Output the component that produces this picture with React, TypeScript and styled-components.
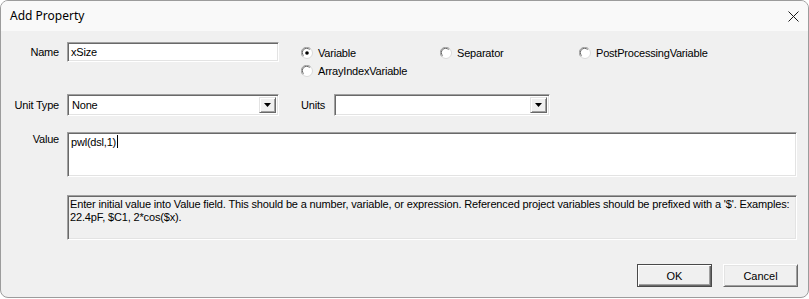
import React from "react";
import styled, { createGlobalStyle } from "styled-components";

const GlobalStyle = createGlobalStyle`
  html, body { margin: 0; padding: 0; background: #ffffff; }
  body { font-family: "Liberation Sans", Arial, sans-serif; }
`;

const Window = styled.div`
  box-sizing: border-box;
  width: 809px;
  height: 298px;
  border: 1px solid #9c9c9c;
  border-radius: 8px;
  overflow: hidden;
  background: #f0f0f0;
  display: flex;
  flex-direction: column;
`;

const TitleBar = styled.div`
  height: 30px;
  background: #f9f9f9;
  display: flex;
  align-items: center;
  justify-content: space-between;
  padding: 0 9px 0 9px;
  flex-shrink: 0;
`;

const Title = styled.div`
  font-family: "Noto Sans", "Open Sans", sans-serif;
  font-size: 12px;
  color: #000;
  margin-top: -1px;
`;

const CloseIcon = styled.svg`
  width: 11px;
  height: 11px;
`;

const Body = styled.div`
  display: flex;
  flex-direction: column;
  padding: 11px 10px 0 0;
  font-size: 11px;
  letter-spacing: -0.2px;
  color: #000;
`;

const Row = styled.div<{ $top?: number }>`
  display: flex;
  align-items: flex-start;
  margin-top: ${(p) => p.$top ?? 0}px;
`;

const Label = styled.div<{ $pt?: number }>`
  width: 58px;
  padding-right: 8px;
  text-align: right;
  flex-shrink: 0;
  padding-top: ${(p) => p.$pt ?? 0}px;
  line-height: 14px;
`;

const sunken = `
  box-sizing: border-box;
  border-style: solid;
  border-width: 1px;
  border-color: #a0a0a0 #ffffff #ffffff #a0a0a0;
  box-shadow: inset 1px 1px 0 #696969, inset -1px -1px 0 #e3e3e3;
`;

const TextInput = styled.div<{ $w: number; $h: number }>`
  ${sunken}
  width: ${(p) => p.$w}px;
  height: ${(p) => p.$h}px;
  background: #ffffff;
  padding: 2px 3px;
  line-height: 14px;
  white-space: nowrap;
`;

const HelpBox = styled.div`
  ${sunken}
  width: 730px;
  height: 45px;
  background: #f0f0f0;
  padding: 2px 2px;
  line-height: 13px;
  letter-spacing: -0.15px;
  white-space: nowrap;
  overflow: hidden;
`;

const Caret = styled.span`
  display: inline-block;
  width: 1px;
  height: 13px;
  background: #000;
  vertical-align: -2px;
  margin-left: 1px;
`;

const Combo = styled.div<{ $w: number }>`
  ${sunken}
  width: ${(p) => p.$w}px;
  height: 22px;
  background: #ffffff;
  display: flex;
  align-items: stretch;
  padding: 2px;
`;

const ComboText = styled.div`
  flex: 1;
  padding: 1px 2px;
  line-height: 14px;
`;

const DropButton = styled.div`
  box-sizing: border-box;
  width: 17px;
  background: #f0f0f0;
  border-style: solid;
  border-width: 1px;
  border-color: #e3e3e3 #696969 #696969 #e3e3e3;
  box-shadow: inset 1px 1px 0 #ffffff, inset -1px -1px 0 #a0a0a0;
  display: flex;
  align-items: center;
  justify-content: center;
`;

const RadioGrid = styled.div`
  display: grid;
  grid-template-columns: repeat(3, 139px);
  grid-auto-rows: 18px;
  margin-left: 22px;
  margin-top: 2px;
`;

const RadioItem = styled.div`
  display: flex;
  align-items: center;
  gap: 5px;
`;

const UnitsLabel = styled.div`
  margin-left: 22px;
  width: 33px;
  line-height: 22px;
`;

const ButtonRow = styled.div`
  display: flex;
  justify-content: flex-end;
  gap: 11px;
  margin-top: 24px;
`;

const Button = styled.div<{ $default?: boolean }>`
  box-sizing: border-box;
  width: 75px;
  height: 23px;
  background: #f0f0f0;
  border: 1px solid ${(p) => (p.$default ? "#4a4a4a" : "#696969")};
  border-top-color: ${(p) => (p.$default ? "#4a4a4a" : "#ffffff")};
  border-left-color: ${(p) => (p.$default ? "#4a4a4a" : "#ffffff")};
  box-shadow: ${(p) =>
    p.$default
      ? "inset 1px 1px 0 #ffffff, inset -1px -1px 0 #696969, inset -2px -2px 0 #a0a0a0"
      : "inset 1px 1px 0 #e3e3e3, inset -1px -1px 0 #a0a0a0"};
  display: flex;
  align-items: center;
  justify-content: center;
  font-size: 11px;
  letter-spacing: 0;
`;

const Radio: React.FC<{ checked?: boolean }> = ({ checked }) => (
  <svg width="12" height="12" viewBox="0 0 12 12">
    <circle cx="6" cy="6" r="5.5" fill="#ffffff" stroke="#d9d9d9" />
    <path d="M1.8 9.5 A5 5 0 0 1 9.5 1.8" fill="none" stroke="#a0a0a0" strokeWidth="1" />
    <path d="M2.6 8.6 A4 4 0 0 1 8.6 2.6" fill="none" stroke="#696969" strokeWidth="1" />
    {checked && <circle cx="6" cy="6" r="1.8" fill="#000" />}
  </svg>
);

const Arrow = () => (
  <svg width="7" height="4" viewBox="0 0 7 4">
    <path d="M0 0 H7 L3.5 4 Z" fill="#000" />
  </svg>
);

export default function App() {
  return (
    <>
      <GlobalStyle />
      <Window>
        <TitleBar>
          <Title>Add Property</Title>
          <CloseIcon viewBox="0 0 11 11">
            <path d="M0.5 0.5 L10.5 10.5 M10.5 0.5 L0.5 10.5" stroke="#1a1a1a" strokeWidth="1" />
          </CloseIcon>
        </TitleBar>
        <Body>
          <Row>
            <Label $pt={3}>Name</Label>
            <TextInput $w={212} $h={20}>xSize</TextInput>
            <RadioGrid>
              <RadioItem>
                <Radio checked />
                Variable
              </RadioItem>
              <RadioItem>
                <Radio />
                Separator
              </RadioItem>
              <RadioItem>
                <Radio />
                PostProcessingVariable
              </RadioItem>
              <RadioItem>
                <Radio />
                ArrayIndexVariable
              </RadioItem>
            </RadioGrid>
          </Row>
          <Row $top={14}>
            <Label $pt={4}>Unit Type</Label>
            <Combo $w={212}>
              <ComboText>None</ComboText>
              <DropButton>
                <Arrow />
              </DropButton>
            </Combo>
            <UnitsLabel>Units</UnitsLabel>
            <Combo $w={216}>
              <ComboText />
              <DropButton>
                <Arrow />
              </DropButton>
            </Combo>
          </Row>
          <Row $top={16}>
            <Label $pt={0}>Value</Label>
            <TextInput $w={730} $h={45}>
              pwl(dsl,1)
              <Caret />
            </TextInput>
          </Row>
          <Row $top={18}>
            <Label />
            <HelpBox>
              Enter initial value into Value field. This should be a number, variable, or expression.
              Referenced project variables should be prefixed with a '$'. Examples:
              <br />
              22.4pF, $C1, 2*cos($x).
            </HelpBox>
          </Row>
          <ButtonRow>
            <Button $default>OK</Button>
            <Button>Cancel</Button>
          </ButtonRow>
        </Body>
      </Window>
    </>
  );
}
